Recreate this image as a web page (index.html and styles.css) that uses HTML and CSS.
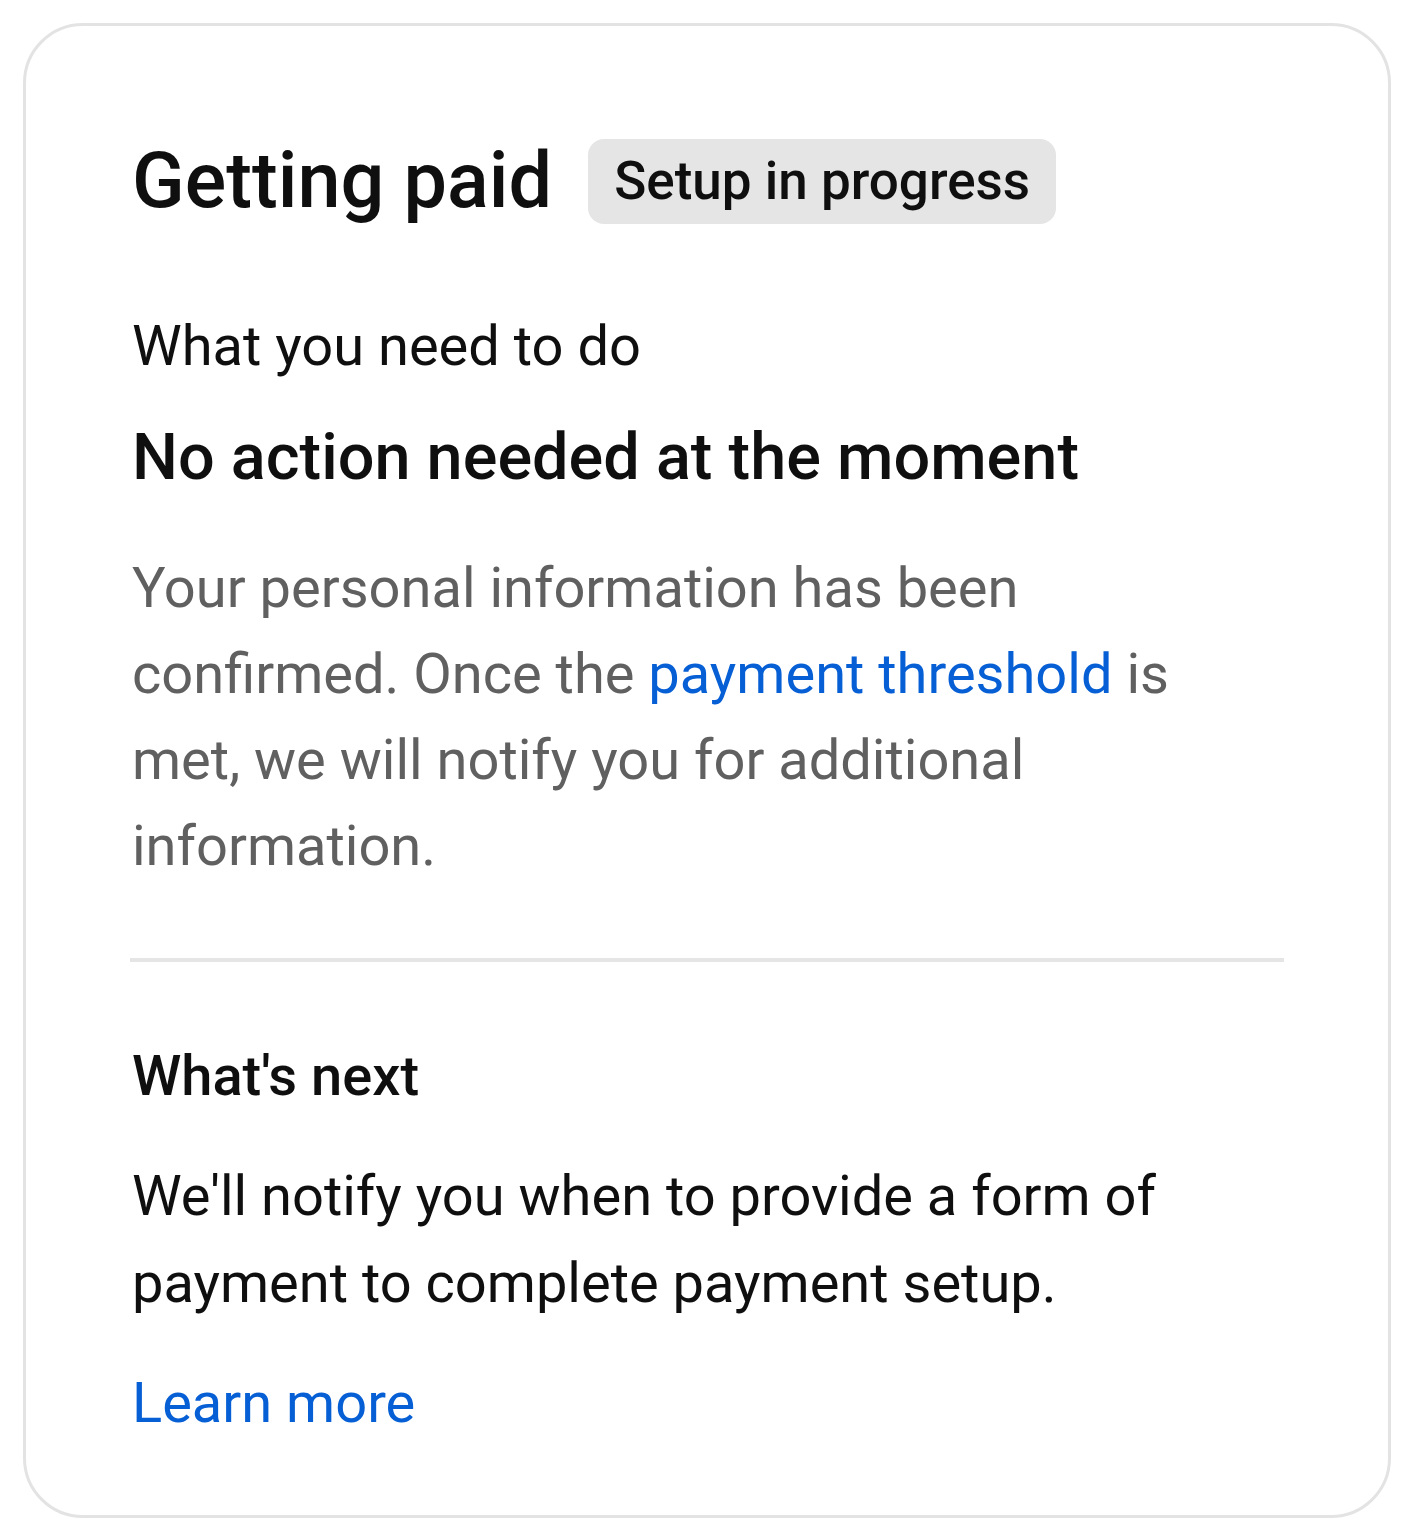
FILE: index.html
```html
<!DOCTYPE html>
<html lang="en">
<head>
<meta charset="utf-8">
<title>Getting paid</title>
<link rel="stylesheet" href="styles.css">
</head>
<body>
<div class="card">
  <div class="header">
    <h1 class="title">Getting paid</h1>
    <span class="chip">Setup in progress</span>
  </div>
  <div class="section">
    <div class="label">What you need to do</div>
    <h2 class="headline">No action needed at the moment</h2>
    <p class="desc">Your personal information has been confirmed. Once the <a class="link" href="#">payment threshold</a> is met, we will notify you for additional information.</p>
  </div>
  <hr class="divider">
  <div class="section next">
    <h3 class="subhead">What's next</h3>
    <p class="body">We'll notify you when to provide a form of payment to complete payment setup.</p>
    <a class="link learn" href="#">Learn more</a>
  </div>
</div>
</body>
</html>
```
FILE: styles.css
```css
html, body {
  margin: 0;
  padding: 0;
  background: #ffffff;
}
body {
  font-family: Roboto, "Noto Sans", Arial, sans-serif;
  color: #0f0f0f;
}
.card {
  margin: 23px 0 0 23px;
  width: 1368px;
  box-sizing: border-box;
  border: 3px solid #e3e3e3;
  border-radius: 60px;
  padding: 110px 104px 76px 106px;
}
.header {
  display: flex;
  align-items: center;
  gap: 36px;
  height: 90px;
}
.title {
  margin: 0;
  font-size: 77.4px;
  font-weight: 500;
  line-height: 90px;
}
.chip {
  background: #e5e5e5;
  border-radius: 16px;
  padding: 0 26px;
  height: 85px;
  display: flex;
  align-items: center;
  font-size: 53px;
  font-weight: 500;
}
.section {
  display: flex;
  flex-direction: column;
}
.label {
  margin-top: 84px;
  font-size: 56px;
  line-height: 72px;
}
.headline {
  margin: 37px 0 0;
  font-size: 64.8px;
  font-weight: 500;
  line-height: 76px;
}
.desc {
  margin: 50px 0 0;
  font-size: 56px;
  line-height: 86px;
  color: #606060;
}
.link {
  color: #065fd4;
  text-decoration: none;
}
.divider {
  margin: 69px 0 0 -2px;
  border: 0;
  height: 4px;
  background: #e5e5e5;
}
.subhead {
  margin: 78px 0 0;
  font-size: 56px;
  font-weight: 500;
  line-height: 72px;
}
.body {
  margin: 41px 0 0;
  font-size: 56px;
  line-height: 87px;
}
.learn {
  margin-top: 40px;
  font-size: 56px;
  line-height: 72px;
  align-self: flex-start;
}
```
